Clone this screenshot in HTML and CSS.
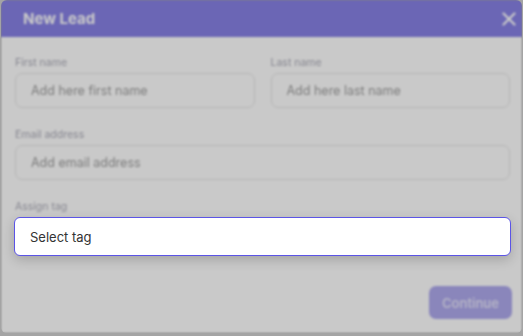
FILE: index.html
```html
<!DOCTYPE html>
<html>
  <head>
    <meta charset="UTF-8" />
    <title>New Lead</title>
    <link rel="stylesheet" href="styles.css">
  </head>
  <body>
    <div class="modal">
      <div class="modal-content">
        <div class="modal-header">
          <h2>New Lead</h2>
          <svg class="close" width="14" height="14" viewBox="0 0 14 14">
            <path d="M1.5 1.5 L12.5 12.5 M12.5 1.5 L1.5 12.5" stroke="#ffffff" stroke-width="2.2" stroke-linecap="round" />
          </svg>
        </div>
        <div class="modal-body">
          <div class="row">
            <div class="field">
              <label>First name</label>
              <div class="input">Add here first name</div>
            </div>
            <div class="field">
              <label>Last name</label>
              <div class="input">Add here last name</div>
            </div>
          </div>
          <div class="field">
            <label>Email address</label>
            <div class="input">Add email address</div>
          </div>
          <div class="field">
            <label>Assign tag</label>
            <div class="select-slot"></div>
          </div>
          <div class="actions">
            <button class="btn">Continue</button>
          </div>
        </div>
      </div>
      <div class="overlay"></div>
      <div class="select-tag">Select tag</div>
    </div>
  </body>
</html>
```

FILE: styles.css
```css
body {
  margin: 0;
  background-color: #a4a4a4;
  font-family: Inter, "Noto Sans", sans-serif;
}
.modal {
  position: relative;
  width: 521px;
  height: 333px;
  margin-left: 1px;
  border-radius: 6px;
  overflow: hidden;
}
.modal-content {
  height: 100%;
  background-color: #ffffff;
  filter: blur(0.8px);
}
.modal-header {
  height: 37px;
  background-color: #8882e6;
  display: flex;
  align-items: center;
  justify-content: space-between;
  padding: 0 6px 0 22px;
}
.modal-header h2 {
  margin: 0;
  color: #ffffff;
  font-size: 15px;
  font-weight: 700;
}
.modal-body {
  padding: 19px 12px 0 14px;
  display: flex;
  flex-direction: column;
  gap: 20px;
}
.row {
  display: flex;
  gap: 16px;
}
.row .field {
  flex: 1;
}
.field label {
  display: block;
  height: 13px;
  line-height: 13px;
  font-size: 10.5px;
  color: #acacb8;
  margin-bottom: 4px;
}
.input {
  height: 35px;
  box-sizing: border-box;
  border: 1px solid #e8e8e8;
  border-radius: 7px;
  background-color: #ffffff;
  padding: 0 15px;
  display: flex;
  align-items: center;
  font-size: 12.5px;
  color: #9e9e9e;
}
.select-slot {
  height: 38px;
}
.actions {
  display: flex;
  justify-content: flex-end;
  margin-top: 11px;
  margin-right: -2px;
}
.btn {
  width: 83px;
  height: 33px;
  border: none;
  border-radius: 7px;
  background-color: #afaaee;
  color: #e6e4fb;
  font-family: inherit;
  font-size: 13px;
  font-weight: 600;
}
.overlay {
  position: absolute;
  inset: 0;
  background-color: rgba(0, 0, 0, 0.21);
}
.select-tag {
  position: absolute;
  left: 13px;
  top: 217px;
  width: 497px;
  height: 39px;
  box-sizing: border-box;
  border: 1px solid #5b54e6;
  border-radius: 6px;
  background-color: #ffffff;
  padding: 0 15px;
  display: flex;
  align-items: center;
  font-size: 13px;
  color: #333333;
  box-shadow: 0 4px 12px rgba(0, 0, 0, 0.18);
}
```
